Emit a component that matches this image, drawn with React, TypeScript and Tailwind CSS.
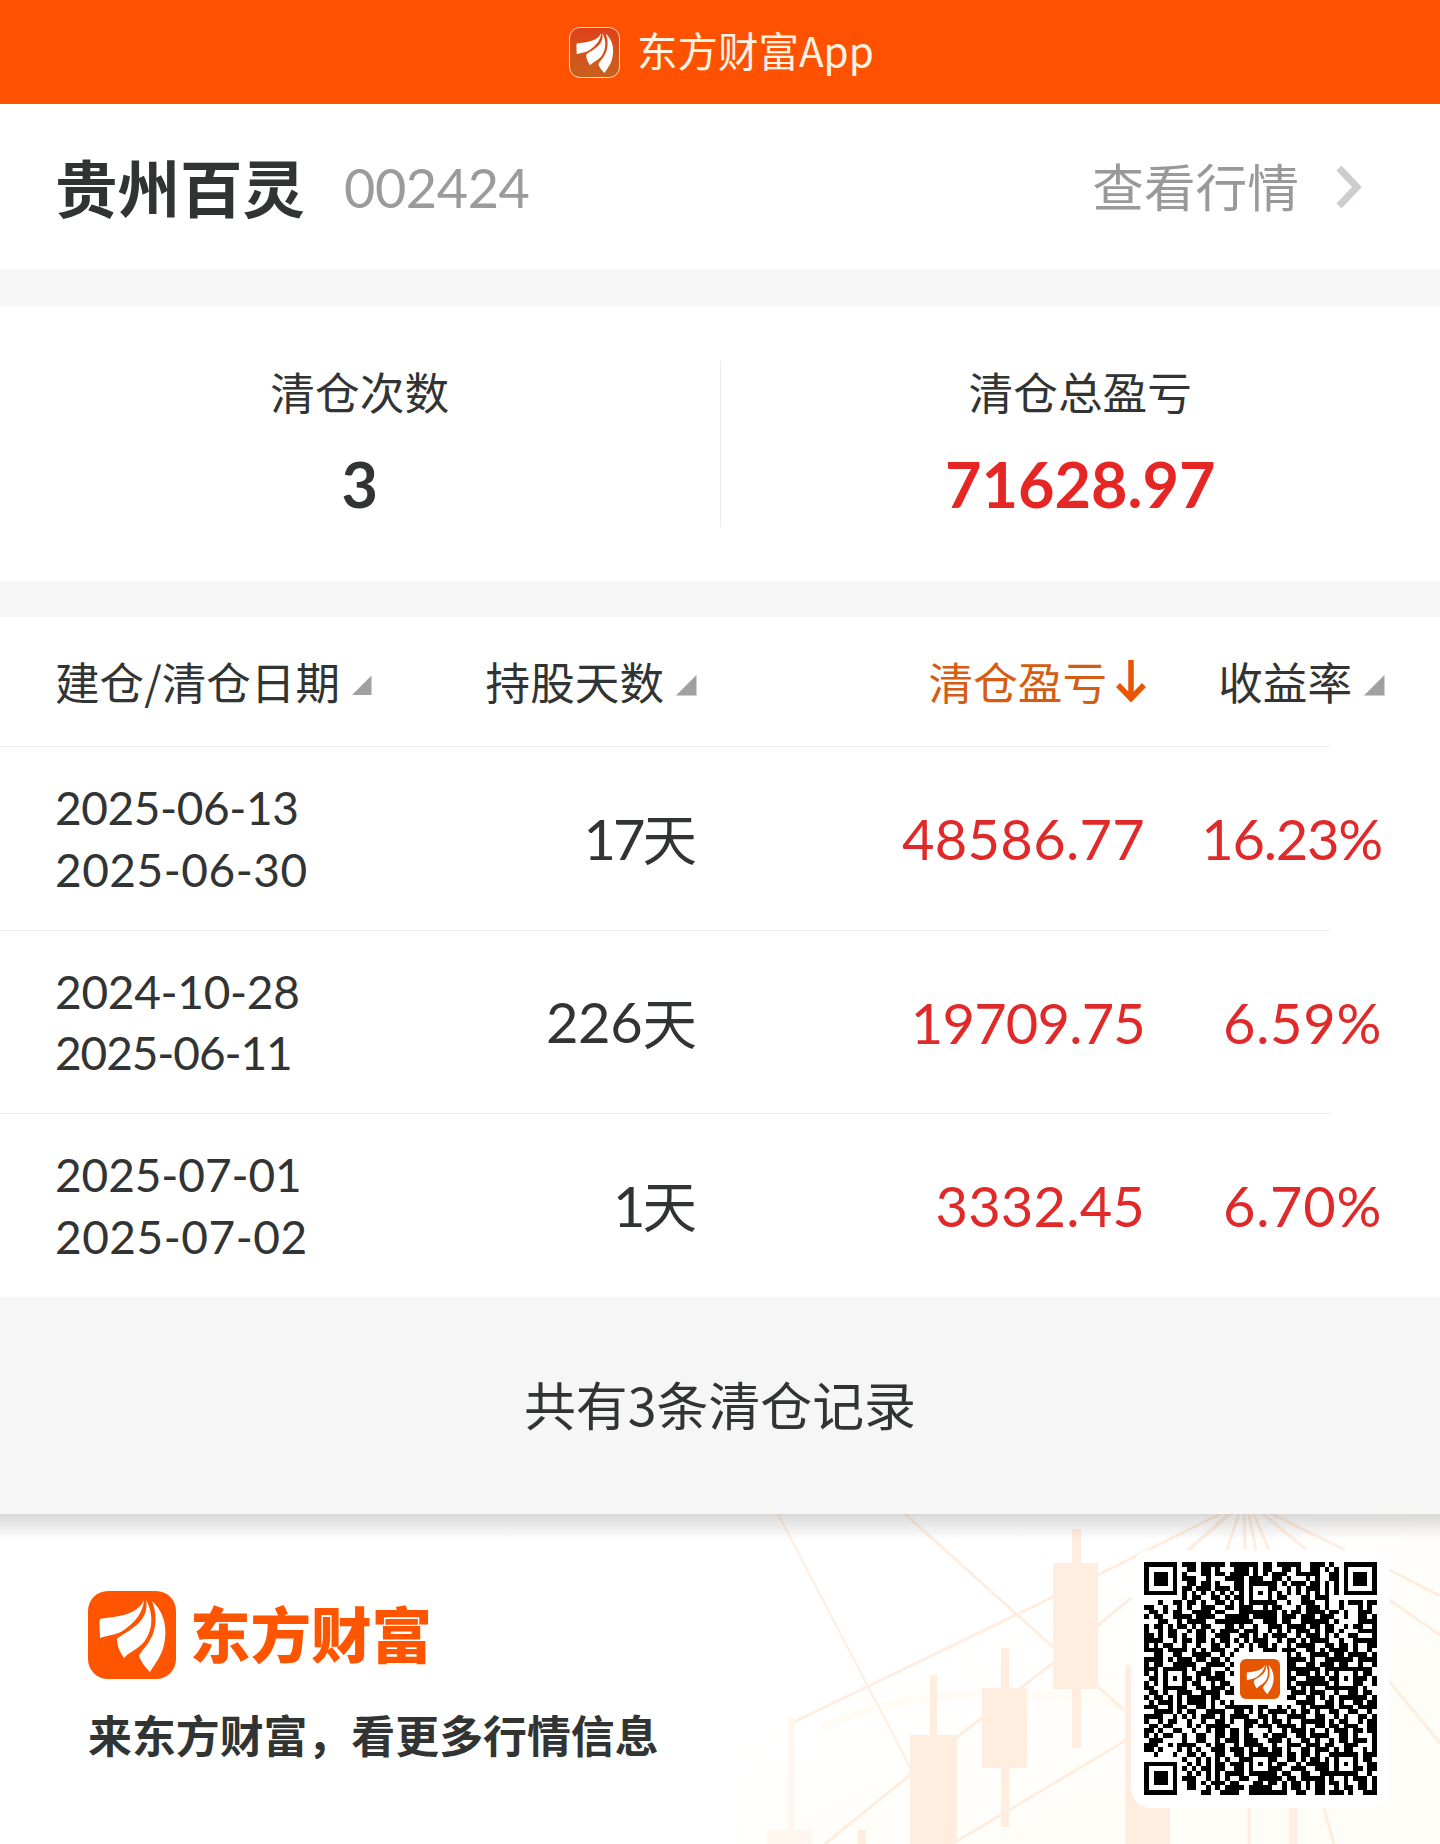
import React from "react";

const CJK = "font-['Noto_Sans_CJK_SC',sans-serif]";
const NUM = "font-['Lato','Noto_Sans_CJK_SC',sans-serif]";

const QR_ROWS = [
  "#######.###.#####.######.##.#####..###.#..#######",
  "#.....#..##.##.#...###.#.##..##.#..##.#.#.#.....#",
  "#.###.#.#...##.##.####.#.#.###..#####..##.#.###.#",
  "#.###.#.###..#...####.###..##.#...#.#..##.#.###.#",
  "#.###.#..##.##.#...##.#.##.#.#.###.##.#.#.#.###.#",
  "#.....#.##.###.###.##.#...##..#.#.###.#.#.#.....#",
  "#######.#.#.#.#.#.#.#.#.#.#.#.#.#.#.#.#.#.#######",
  "........#.##..##.#.##.#...#.##...##.###..........",
  "...#..##.##.#..##.#.#.######..#..###..#..#.###.##",
  "##..#..#.#..###..##.###..#.##...#.###.#..#...#.#.",
  ".##.#.##..####.##...########.#.##.####.##.#..###.",
  "#.##..####.####..#####.#####.###.###.###..#..##.#",
  "...##..#.####..########..###.##..######.#....####",
  "#.##.#.##.#.##...##.#..#..###.####.##.##..#.##..#",
  "#..#.##..#.##.#.####.###..#.#.#.###.#.##.#...####",
  "##.#.##.#..##..###..##.#.#.###..#.###.#.#..##...#",
  "####..#.##.##.#.##.#.#.###..#.##.#.####..#..#####",
  "#.#.##..#..#..##.#..#.#.##.#..#.####..##.##.#..##",
  "####.####.#.#.###..#..#..###.###..##.#.####.#..#.",
  "..##..##..####..#.####.#....###.#..####.##.####.#",
  "####.#.###.##.##.#.#..........####.#..######.####",
  "#.##..#####..####.#...........##..##.###.##..#..#",
  "###.####..#.##...#............#######.##########.",
  "#.#.#...#..###.##.#...........#.###.#.#.#...#.##.",
  ".##.#.#.##.#.####.............##..####.##.#.###.#",
  "#.#.#...#.##..#.##............#.#######.#...##..#",
  "##..#####..##.###.#...........##.#.#..#######.#..",
  ".##.#..###..####.##............###.###..#..##.##.",
  "#.##.#.#.####.##..............##..##.#.#.######.#",
  ".#.###.#.####.#.#.#.##.#.##.##..####..##.#..##.##",
  "###..#.##..##.#..######.##..#.#..#.#####.###.####",
  "..####.#.##..####..##.#.#.####.#.##.#..##..##..#.",
  "####..#.#.#.###.#.####..##.#..####..##..#.#..##.#",
  "#..#.##..#..#..##.#..###.#.##.#..#####.#.##..#.##",
  ".##.##...#.#.#####...##.###.####.#..##.##.###..##",
  "##.#..##..#..#.##.##.#....#..#.###.#..#.###.##.##",
  "#.#.##..#..##..##.##.##..#.###..##.####..##.#...#",
  ".###....#..##..#.###.###..###.#..##.#..#.##.###.#",
  "###..#.####..#.##..#.####..#..###.###.##..###...#",
  "##.#...#.#.#..###.###.#.##.##.#..##.###.#.##..#.#",
  "..#...#..##.#..##..##.#######.##.##.#..######.###",
  "........#..#.#.#.#..####...#..##.#.##.#.#...#.##.",
  "#######..#.#.#.##.###.#.#.#.##..#.#####.#.#.#..##",
  "#.....#.#.#.##.##..##.##...##..###..###.#...##.##",
  "#.###.#..#.#.#.#.####.######.##..##..########..#.",
  "#.###.#.###..#.#.#..##..#####.##.#####.#..#.###.#",
  "#.###.#..##.#.###.##...##.##.#.##.#.##.##.#..##.#",
  "#.....#..##..#.#.####.#####..#.##.#.##..#.##.##.#",
  "#######.....##..####..########..##..##.###.#..###",
];

function QrCode() {
  const cells: string[] = [];
  QR_ROWS.forEach((row, y) => {
    for (let x = 0; x < row.length; x++) {
      if (row[x] !== "#") continue;
      let end = x;
      while (row[end + 1] === "#") end++;
      cells.push(`M${x} ${y}h${end - x + 1}v1h-${end - x + 1}z`);
      x = end;
    }
  });
  const alignment = [
    [24, 6],
    [6, 24],
    [42, 24],
    [24, 42],
    [42, 42],
  ];
  return (
    <svg viewBox="0 0 49 49" className="size-[233px]" shapeRendering="crispEdges">
      <path d={cells.join("")} />
      {alignment.map(([x, y]) => (
        <g key={`${x}-${y}`}>
          <rect x={x - 2} y={y - 2} width="5" height="5" />
          <rect x={x - 1} y={y - 1} width="3" height="3" fill="#fff" />
          <rect x={x} y={y} width="1" height="1" />
        </g>
      ))}
      <rect x="19" y="19" width="11" height="11" fill="#fff" />
    </svg>
  );
}

function Feathers({ className }: { className?: string }) {
  return (
    <svg viewBox="0 0 88 88" className={className} fill="#fff">
      <path d="M56 9C52 19 40 24 26 26C20 27 15 27 12 28C11 34 12 40 12 47C20 44 29 44 36 39C47 31 55 22 56 9Z" />
      <path d="M58 9C60 18 57 28 46 36C40 41 33 44 29 48C29 55 32 61 36 67C41 61 49 59 56 51C66 38 65 21 58 9Z" />
      <path d="M64 10C69 22 69 38 62 49C59 55 53 60 51 65C53 71 57 76 62 81C67 72 75 65 77 48C79 32 74 19 64 10Z" />
    </svg>
  );
}

function Watermark() {
  return (
    <svg viewBox="740 1514 700 330" className="absolute top-0 right-0 h-[330px] w-[700px]">
      <defs>
        <linearGradient id="warm" x1="0" y1="0" x2="1" y2="1">
          <stop offset="0.35" stopColor="#fffdf5" stopOpacity="0" />
          <stop offset="0.8" stopColor="#fffdf7" />
        </linearGradient>
      </defs>
      <rect x="740" y="1514" width="700" height="330" fill="url(#warm)" />
      <path d="M820 1728Q900 1692 1000 1694T1120 1706" stroke="#fffcf6" strokeWidth="8" fill="none" />
      <g stroke="#ffeee0" strokeWidth="3" fill="none">
        <path d="M778 1514L910 1767" strokeWidth="2" />
        <path d="M905 1514L1053 1647L1124 1710" />
        <path d="M790 1724L1053 1597L1098 1575L1228 1510" />
        <path d="M825 1844L957 1737L1053 1663L1131 1598L1240 1506" />
        <path d="M952 1844L1140 1732" />
        <path d="M1232 1510L1189 1550M1240 1510L1227 1550M1244 1510L1245 1550M1248 1510L1256 1550M1252 1510L1269 1550M1258 1510L1307 1550M1264 1510L1345 1550" />
        <path d="M1388 1569L1440 1596M1388 1599L1440 1635M1388 1680L1440 1743M1324 1808L1334 1844M1249 1808V1844" />
      </g>
      <g fill="#ffeee0">
        <path d="M1072 1529h9v34h17v126h-17v59h-9v-59h-19v-126h19z" />
        <path d="M1001 1648h8v40h18v80h-18v59h-8v-59h-19v-80h19z" />
        <path d="M930 1675h7v60h20v109h-47v-109h20z" />
        <path d="M1125 1665h7v80h38v99h-45z" />
        <path d="M858 1830h8v14h-8zM1289 1800h8v44h-8z" />
      </g>
      <path d="M788 1718h6v112h18v14h-45v-14h21z" fill="#fff6ef" />
    </svg>
  );
}

function SortMark() {
  return (
    <svg viewBox="0 0 21 21" className="mb-[15px] ml-[12px] size-[21px] self-end">
      <path d="M20.5 0V20.5H0Z" fill="#a0a0a0" />
    </svg>
  );
}

type Row = {
  open: string;
  close: string;
  days: string;
  profit: string;
  rate: string;
  openTrack: string;
  closeTrack: string;
  daysTrack: string;
  profitTrack: string;
  rateTrack: string;
};

const ROWS: Row[] = [
  {
    open: "2025-06-13", close: "2025-06-30", days: "17", profit: "48586.77", rate: "16.23%",
    openTrack: "tracking-[-0.4px]", closeTrack: "tracking-[0.5px]", daysTrack: "tracking-[-3px]",
    profitTrack: "tracking-[0.3px]", rateTrack: "tracking-[-1.2px]",
  },
  {
    open: "2024-10-28", close: "2025-06-11", days: "226", profit: "19709.75", rate: "6.59%",
    openTrack: "tracking-[-0.3px]", closeTrack: "tracking-[-1.1px]", daysTrack: "tracking-[-0.3px]",
    profitTrack: "tracking-[-0.8px]", rateTrack: "tracking-[0.7px]",
  },
  {
    open: "2025-07-01", close: "2025-07-02", days: "1", profit: "3332.45", rate: "6.70%",
    openTrack: "tracking-[-0.1px]", closeTrack: "tracking-[0.5px]", daysTrack: "tracking-[-3px]",
    profitTrack: "tracking-[0.2px]", rateTrack: "tracking-[0.7px]",
  },
];

export default function App() {
  return (
    <div className={`flex h-[1844px] w-[1440px] flex-col overflow-hidden bg-white text-[#323433] ${CJK}`}>
      <header className="flex h-[104px] shrink-0 items-center bg-[#ff5200] pl-[569px] text-white">
        <div className="flex size-[51px] items-center justify-center rounded-[11px] border border-[#ffd9c4] bg-linear-to-b from-[#e0401a] to-[#c8601c]">
          <Feathers className="size-[49px]" />
        </div>
        <span className="ml-[17px] pb-[4px] text-[40.5px] leading-none text-[#fff3e6]">东方财富App</span>
      </header>

      <section className="flex h-[165px] shrink-0 items-center pl-[55px]">
        <h1 className="pb-[1px] text-[62.5px] leading-none font-bold">贵州百灵</h1>
        <span className={`ml-[39px] pt-[2px] text-[54px] leading-none tracking-[-0.4px] text-[#9b9b9b] ${NUM}`}>002424</span>
        <span className="ml-auto pb-[4px] text-[51.7px] leading-none text-[#999]">查看行情</span>
        <svg viewBox="0 0 26 42" className="mr-[78px] ml-[37px] h-[42px] w-[26px]">
          <path d="M3 2L21 21L3 40" fill="none" stroke="#cfcccd" strokeWidth="7" />
        </svg>
      </section>
      <div className="h-[37px] shrink-0 bg-[#f7f7f7]" />

      <section className="flex h-[275px] shrink-0 items-center">
        <div className="flex flex-1 flex-col items-center pb-[5px]">
          <span className="text-[44.7px] leading-[60px]">清仓次数</span>
          <span className={`mt-[25px] text-[63px] leading-[76px] font-bold ${NUM}`}>3</span>
        </div>
        <div className="h-[166px] w-px bg-[#ececec]" />
        <div className="flex flex-1 flex-col items-center pb-[5px]">
          <span className="text-[44.7px] leading-[60px]">清仓总盈亏</span>
          <span className={`mt-[25px] text-[63px] leading-[76px] font-bold text-[#e62525] ${NUM}`}>71628.97</span>
        </div>
      </section>
      <div className="h-[36px] shrink-0 bg-[#f7f7f7]" />

      <section className="shrink-0">
        <div className="grid h-[129px] grid-cols-[317px_325px_449px_239px] items-center pb-[2px] pl-[55px] text-[44.6px] leading-[60px]">
          <div className="flex whitespace-nowrap">建仓/清仓日期<SortMark /></div>
          <div className="flex justify-end">持股天数<SortMark /></div>
          <div className="flex items-center justify-end text-[#d65c13]">
            清仓盈亏
            <svg viewBox="0 0 30 44" className="ml-[9px] h-[44px] w-[30px]">
              <path d="M15 1V39M2 26L15 39.500L28 26" fill="none" stroke="#ea5504" strokeWidth="5.500" />
            </svg>
          </div>
          <div className="flex justify-end">收益率<SortMark /></div>
        </div>
        {ROWS.map((row) => (
          <div key={row.open}>
            <div className="h-px w-[1330px] bg-[#ebebeb]" />
            <div className={`grid h-[182.6px] grid-cols-[373px_267px_450px_237px] items-center pl-[55px] text-[56px] leading-none text-[#e02a2a] ${NUM}`}>
              <div className="flex flex-col pt-[1px] text-[46px] leading-[61.500px] text-[#323433]">
                <span className={row.openTrack}>{row.open}</span>
                <span className={row.closeTrack}>{row.close}</span>
              </div>
              <div className="-mr-[2px] flex items-center justify-end pt-[1px] text-[#323433]">
                <span className={row.daysTrack}>{row.days}</span>
                <span className={`pb-[3px] text-[54.5px] leading-none ${CJK}`}>天</span>
              </div>
              <span className={`pt-[2px] text-right ${row.profitTrack}`}>{row.profit}</span>
              <span className={`pt-[2px] text-right ${row.rateTrack}`}>{row.rate}</span>
            </div>
          </div>
        ))}
      </section>

      <div className="flex h-[217px] shrink-0 items-center justify-center bg-[#f6f6f6] pb-[2px] text-[51.9px] leading-none">
        共有3条清仓记录
      </div>

      <footer className="relative flex h-[330px] shrink-0 items-start justify-between bg-white">
        <Watermark />
        <div className="absolute inset-x-0 top-0 h-[26px] bg-linear-to-b from-black/15 to-transparent" />
        <div className="relative pt-[77px] pl-[88px]">
          <div className="flex items-center">
            <div className="size-[88px] rounded-[20px] bg-[#ff5500]">
              <Feathers className="size-[88px]" />
            </div>
            <span className="ml-[14px] pb-[5px] text-[60.500px] leading-none font-black text-[#ff5500]">东方财富</span>
          </div>
          <p className="mt-[33px] text-[43.9px] leading-[44px] font-bold">来东方财富，看更多行情信息</p>
        </div>
        <div className="relative mt-[36px] mr-[51px] flex size-[258px] items-center justify-center rounded-[20px] bg-white">
          <QrCode />
          <div className="absolute flex size-[40px] items-center justify-center rounded-[6px] bg-[#e65500]">
            <Feathers className="size-[36px]" />
          </div>
        </div>
      </footer>
    </div>
  );
}
